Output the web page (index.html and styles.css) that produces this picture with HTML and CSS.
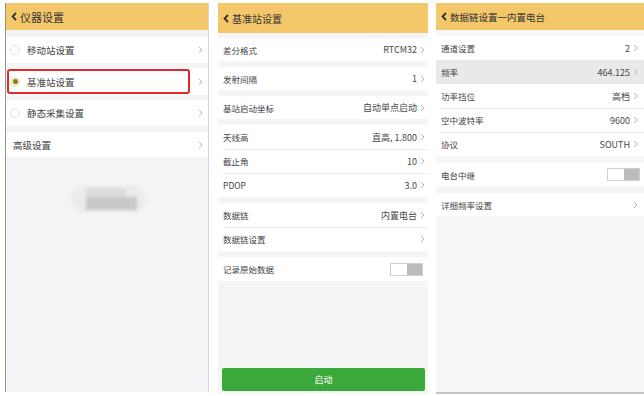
FILE: index.html
```html
<!DOCTYPE html>
<html lang="zh-CN">
<head>
<meta charset="utf-8">
<title>仪器设置</title>
<link rel="stylesheet" href="styles.css">
</head>
<body>
<div class="screens">
  <section class="panel p1">
    <header class="hdr">
      <svg class="back" width="6" height="9" viewBox="0 0 6 9"><path d="M5 1 L1.6 4.5 L5 8" fill="none" stroke="#333" stroke-width="1.8"/></svg>
      <span>仪器设置</span>
    </header>
    <div class="list1">
      <div class="row r1"><span class="radio"></span><span class="lbl">移动站设置</span><svg class="chev" width="5" height="8" viewBox="0 0 5 8"><path d="M1 1 L4 4 L1 7" fill="none" stroke="#b5b5b5" stroke-width="1"/></svg></div>
      <div class="row r1 hl"><span class="radio on"></span><span class="lbl">基准站设置</span><svg class="chev" width="5" height="8" viewBox="0 0 5 8"><path d="M1 1 L4 4 L1 7" fill="none" stroke="#b5b5b5" stroke-width="1"/></svg><span class="redbox"></span></div>
      <div class="row r1"><span class="radio"></span><span class="lbl">静态采集设置</span><svg class="chev" width="5" height="8" viewBox="0 0 5 8"><path d="M1 1 L4 4 L1 7" fill="none" stroke="#b5b5b5" stroke-width="1"/></svg></div>
      <div class="row r1 plain"><span class="lbl">高级设置</span><svg class="chev" width="5" height="8" viewBox="0 0 5 8"><path d="M1 1 L4 4 L1 7" fill="none" stroke="#b5b5b5" stroke-width="1"/></svg></div>
    </div>
    <div class="toast"><span class="t1"></span><span class="t2"></span></div>
  </section>

  <section class="panel p2">
    <header class="hdr">
      <svg class="back" width="6" height="9" viewBox="0 0 6 9"><path d="M5 1 L1.6 4.5 L5 8" fill="none" stroke="#333" stroke-width="1.8"/></svg>
      <span>基准站设置</span>
    </header>
    <div class="group first">
      <div class="row s"><span class="lbl">差分格式</span><span class="val">RTCM32</span><svg class="chev" width="5" height="8" viewBox="0 0 5 8"><path d="M1 1 L4 4 L1 7" fill="none" stroke="#b5b5b5" stroke-width="1"/></svg></div>
    </div>
    <div class="group">
      <div class="row s"><span class="lbl">发射间隔</span><span class="val">1</span><svg class="chev" width="5" height="8" viewBox="0 0 5 8"><path d="M1 1 L4 4 L1 7" fill="none" stroke="#b5b5b5" stroke-width="1"/></svg></div>
    </div>
    <div class="group">
      <div class="row s"><span class="lbl">基站启动坐标</span><span class="val">自动单点启动</span><svg class="chev" width="5" height="8" viewBox="0 0 5 8"><path d="M1 1 L4 4 L1 7" fill="none" stroke="#b5b5b5" stroke-width="1"/></svg></div>
    </div>
    <div class="group">
      <div class="row"><span class="lbl">天线高</span><span class="val">直高, 1.800</span><svg class="chev" width="5" height="8" viewBox="0 0 5 8"><path d="M1 1 L4 4 L1 7" fill="none" stroke="#b5b5b5" stroke-width="1"/></svg></div>
      <div class="row"><span class="lbl">截止角</span><span class="val">10</span><svg class="chev" width="5" height="8" viewBox="0 0 5 8"><path d="M1 1 L4 4 L1 7" fill="none" stroke="#b5b5b5" stroke-width="1"/></svg></div>
      <div class="row"><span class="lbl">PDOP</span><span class="val">3.0</span><svg class="chev" width="5" height="8" viewBox="0 0 5 8"><path d="M1 1 L4 4 L1 7" fill="none" stroke="#b5b5b5" stroke-width="1"/></svg></div>
    </div>
    <div class="group">
      <div class="row"><span class="lbl">数据链</span><span class="val">内置电台</span><svg class="chev" width="5" height="8" viewBox="0 0 5 8"><path d="M1 1 L4 4 L1 7" fill="none" stroke="#b5b5b5" stroke-width="1"/></svg></div>
      <div class="row"><span class="lbl">数据链设置</span><svg class="chev" width="5" height="8" viewBox="0 0 5 8"><path d="M1 1 L4 4 L1 7" fill="none" stroke="#b5b5b5" stroke-width="1"/></svg></div>
    </div>
    <div class="group">
      <div class="row"><span class="lbl">记录原始数据</span><span class="toggle"><span class="knob"></span><span class="off"></span></span></div>
    </div>
    <div class="fill"></div>
    <button class="start">启动</button>
  </section>

  <section class="panel p3">
    <header class="hdr">
      <svg class="back" width="6" height="9" viewBox="0 0 6 9"><path d="M5 1 L1.6 4.5 L5 8" fill="none" stroke="#333" stroke-width="1.8"/></svg>
      <span>数据链设置一内置电台</span>
    </header>
    <div class="group first">
      <div class="row"><span class="lbl">通道设置</span><span class="val">2</span><svg class="chev" width="5" height="8" viewBox="0 0 5 8"><path d="M1 1 L4 4 L1 7" fill="none" stroke="#b5b5b5" stroke-width="1"/></svg></div>
      <div class="row sel"><span class="lbl">频率</span><span class="val">464.125</span><svg class="chev" width="5" height="8" viewBox="0 0 5 8"><path d="M1 1 L4 4 L1 7" fill="none" stroke="#b5b5b5" stroke-width="1"/></svg></div>
      <div class="row"><span class="lbl">功率挡位</span><span class="val">高档</span><svg class="chev" width="5" height="8" viewBox="0 0 5 8"><path d="M1 1 L4 4 L1 7" fill="none" stroke="#b5b5b5" stroke-width="1"/></svg></div>
      <div class="row"><span class="lbl">空中波特率</span><span class="val">9600</span><svg class="chev" width="5" height="8" viewBox="0 0 5 8"><path d="M1 1 L4 4 L1 7" fill="none" stroke="#b5b5b5" stroke-width="1"/></svg></div>
      <div class="row"><span class="lbl">协议</span><span class="val">SOUTH</span><svg class="chev" width="5" height="8" viewBox="0 0 5 8"><path d="M1 1 L4 4 L1 7" fill="none" stroke="#b5b5b5" stroke-width="1"/></svg></div>
    </div>
    <div class="group">
      <div class="row s"><span class="lbl">电台中继</span><span class="toggle"><span class="knob"></span><span class="off"></span></span></div>
    </div>
    <div class="group">
      <div class="row s"><span class="lbl">详细频率设置</span><svg class="chev" width="5" height="8" viewBox="0 0 5 8"><path d="M1 1 L4 4 L1 7" fill="none" stroke="#b5b5b5" stroke-width="1"/></svg></div>
    </div>
    <div class="fill"></div>
  </section>
</div>
</body>
</html>
```

FILE: styles.css
```css
html, body {
  margin: 0;
  background: #fff;
}
body {
  font-family: "Noto Sans CJK SC", "Noto Sans", sans-serif;
  color: #444;
}
.screens {
  display: flex;
  align-items: flex-start;
  padding: 3px 0 0 5px;
  height: 396px;
  box-sizing: border-box;
}
.panel {
  display: flex;
  flex-direction: column;
  box-sizing: border-box;
  background: #f4f4f6;
}
.p1 {
  width: 204px;
  height: 389px;
  margin-right: 9px;
  border-left: 1px solid #8c9a84;
  border-right: 1px solid #d6d6d6;
}
.p2 {
  width: 210px;
  height: 391px;
  margin-right: 8px;
  background: #f5f5f5;
}
.p3 {
  width: 208px;
  height: 391px;
  background: #f6f6f6;
  border-bottom: 2px solid #c4c4c4;
}
.hdr {
  flex: none;
  height: 27px;
  background: #f5c76b;
  display: flex;
  align-items: center;
  gap: 3px;
  padding-left: 5px;
  font-size: 11px;
  color: #333;
}
.p2 .hdr { height: 30px; font-size: 10px; }
.p3 .hdr { font-size: 9.5px; }
.back { flex: none; }

.row {
  display: flex;
  align-items: center;
  height: 24px;
  background: #fff;
  padding: 0 3px 0 5px;
  font-size: 8.5px;
  flex: none;
}
.row.s { height: 23px; }
.lbl { flex: 1; }
.val { color: #484848; font-size: 9px; margin-right: 3px; }
.chev { flex: none; }

/* panel 1 list */
.list1 {
  display: flex;
  flex-direction: column;
  gap: 5px;
  margin-top: 7px;
}
.row.r1 {
  height: 26px;
  font-size: 9.5px;
  padding: 0 5px 0 4px;
  position: relative;
}
.row.r1.hl { height: 27px; }
.row.r1.plain { height: 25px; padding-left: 7px; margin-top: 1px; }
.radio {
  flex: none;
  width: 10px;
  height: 10px;
  box-sizing: border-box;
  border-radius: 50%;
  border: 1px solid #e2e2e2;
  margin-right: 7px;
  display: flex;
  align-items: center;
  justify-content: center;
}
.radio.on {
  background: #f3ebc6;
  border-color: #efe4b8;
}
.radio.on::after {
  content: "";
  width: 5px;
  height: 5px;
  border-radius: 50%;
  background: #8b7a1c;
}
.redbox {
  position: absolute;
  left: 1px;
  top: 1px;
  bottom: 1px;
  width: 183px;
  box-sizing: border-box;
  border: 2px solid #e2262a;
  border-radius: 3px;
}
.toast {
  margin: 29px 0 0 65px;
  width: 75px;
  height: 26px;
  border-radius: 13px;
  background: #ebebed;
  filter: blur(1.5px);
  display: flex;
  flex-direction: column;
  padding: 2px 0 0 15px;
  box-sizing: border-box;
}
.t1 { width: 40px; height: 9px; background: #dcdcde; }
.t2 { width: 51px; height: 13px; background: #c9c9cb; }

/* groups */
.group {
  display: flex;
  flex-direction: column;
  margin-top: 6px;
  flex: none;
}
.p2 .group.first { margin-top: 5px; }
.p3 .group { margin-top: 7px; }
.p3 .group.first { margin-top: 6px; }
.group .row + .row {
  background-image: linear-gradient(#ececec, #ececec);
  background-size: calc(100% - 5px) 1px;
  background-position: right top;
  background-repeat: no-repeat;
}
.p3 .row { padding-right: 6px; }
.row.sel { background-color: #e9e9eb; }
.row.sel + .row { background-image: none; }

.toggle {
  flex: none;
  display: flex;
  width: 33px;
  height: 13px;
  box-sizing: border-box;
  border: 1px solid #cfcfcf;
  margin-right: 2px;
}
.p3 .toggle { margin-right: -2px; }
.knob { flex: 1; background: #fff; }
.off { flex: 1; background: #bcbcbc; }

.fill { flex: 1; }
.start {
  flex: none;
  height: 23px;
  margin: 0 3px 3px 4px;
  border: 0;
  border-radius: 2px;
  background: #3aa93a;
  color: #fff;
  font-family: inherit;
  font-size: 9px;
  padding: 0;
}
```
